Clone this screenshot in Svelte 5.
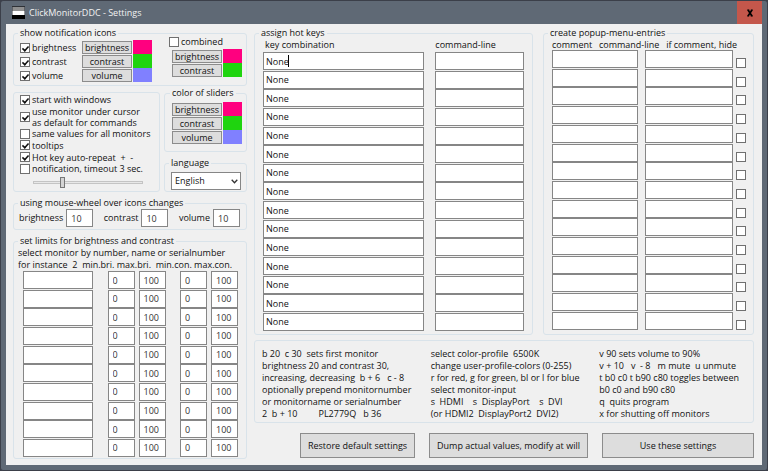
<script>
  const PINK = '#ff007f';
  const GREEN = '#1fd40f';
  const BLUE = '#8080ff';

  const icons = ['brightness', 'contrast', 'volume'];
  const iconColors = [
    { name: 'brightness', color: PINK },
    { name: 'contrast', color: GREEN },
    { name: 'volume', color: BLUE }
  ];
  const options = [
    { text: 'start with windows', on: true },
    { text: 'use monitor under cursor\nas default for commands', on: true },
    { text: 'same values for all monitors', on: false },
    { text: 'tooltips', on: true },
    { text: 'Hot key auto-repeat  +  -', on: true },
    { text: 'notification, timeout 3 sec.', on: false }
  ];
  const limitRows = Array.from({ length: 10 }, (_, i) => i + 1);
  const keyRows = Array.from({ length: 15 }, (_, i) => i + 1);
  const help = [
    [
      'b 20  c 30  sets first monitor',
      'brightness 20 and contrast 30,',
      'increasing, decreasing  b + 6   c - 8',
      'optionally prepend monitornumber',
      'or monitorname or serialnumber',
      '2  b + 10         PL2779Q   b 36'
    ],
    [
      'select color-profile  6500K',
      'change user-profile-colors (0-255)',
      'r for red, g for green, bl or l for blue',
      'select monitor-input',
      's  HDMI    s  DisplayPort    s  DVI',
      '(or HDMI2  DisplayPort2  DVI2)'
    ],
    [
      'v 90 sets volume to 90%',
      'v + 10   v  - 8   m mute  u unmute',
      't b0 c0 t b90 c80 toggles between',
      'b0 c0 and b90 c80',
      'q  quits program',
      'x for shutting off monitors'
    ]
  ];
</script>

{#snippet colorRows(items)}
  <div class="colors">
    {#each items as item}
      <div class="color">
        <button class="btn small">{item.name}</button>
        <span class="swatch" style="background:{item.color}"></span>
      </div>
    {/each}
  </div>
{/snippet}

<div class="window">
  <header>
    <svg class="logo" width="13" height="13" viewBox="0 0 13 13" aria-hidden="true">
      <rect width="13" height="13" fill="#2e3136" />
      <rect x="0.5" y="1" width="12" height="4" fill="#8f8f8f" />
      <rect x="0.5" y="5" width="12" height="4" fill="#fff" />
      <rect y="9" width="13" height="4" fill="#000" />
    </svg>
    <h1>ClickMonitorDDC - Settings</h1>
    <button class="close" aria-label="Close">
      <svg width="8" height="8" viewBox="0 0 8 8" aria-hidden="true">
        <path
          d="M1 1 H3.4 M4.8 1 H7 M1 7 H3.2 M4.6 7 H7"
          stroke="#000"
          stroke-width="0.8"
        />
        <path d="M2 1 L6 7 M6 1 L2 7" stroke="#000" stroke-width="1.7" />
      </svg>
    </button>
  </header>

  <main>
    <div class="left">
      <fieldset class="icons">
        <legend>show notification icons</legend>
        <div class="checks">
          {#each icons as name}
            <label class="check"><input type="checkbox" checked />{name}</label>
          {/each}
        </div>
        {@render colorRows(iconColors)}
        <div class="combined">
          <label class="check"><input type="checkbox" />combined</label>
          {@render colorRows(iconColors.slice(0, 2))}
        </div>
      </fieldset>

      <div class="middle">
        <fieldset class="options" aria-label="options">
          {#each options as option}
            <label class="check"><input type="checkbox" checked={option.on} />{option.text}</label>
          {/each}
          <input class="slider" type="range" min="0" max="100" value="25" aria-label="timeout" />
        </fieldset>
        <div class="side">
          <fieldset class="sliders">
            <legend>color of sliders</legend>
            {@render colorRows(iconColors)}
          </fieldset>
          <fieldset class="language">
            <legend>language</legend>
            <div class="select">
              <select aria-label="language"><option>English</option></select>
              <svg width="7" height="5" viewBox="0 0 7 5" aria-hidden="true">
                <path d="M0.7 0.8 L3.5 3.8 L6.3 0.8" fill="none" stroke="#333" stroke-width="1.3" />
              </svg>
            </div>
          </fieldset>
        </div>
      </div>

      <fieldset class="wheel">
        <legend>using mouse-wheel over icons changes</legend>
        {#each icons as name}
          <label>{name}<input class="num" type="text" value="10" /></label>
        {/each}
      </fieldset>

      <fieldset class="limits">
        <legend>set limits for brightness and contrast</legend>
        <p>select monitor by number, name or serialnumber</p>
        <p>for instance  2  min.bri. max.bri.  min.con. max.con.</p>
        <div class="rows">
          {#each limitRows as n}
            <div class="limit">
              <input class="monitor" type="text" aria-label="monitor {n}" />
              <div class="pair">
                <input class="num" type="text" value="0" aria-label="min.bri. {n}" />
                <input class="num" type="text" value="100" aria-label="max.bri. {n}" />
              </div>
              <div class="pair">
                <input class="num" type="text" value="0" aria-label="min.con. {n}" />
                <input class="num" type="text" value="100" aria-label="max.con. {n}" />
              </div>
            </div>
          {/each}
        </div>
      </fieldset>
    </div>

    <div class="right">
      <div class="tables">
        <fieldset class="keys">
          <legend>assign hot keys</legend>
          <div class="key head"><span>key combination</span><span>command-line</span></div>
          <div class="rows">
            {#each keyRows as n}
              <div class="key">
                <div class="field">
                  <input type="text" value="None" aria-label="key combination {n}" />
                  {#if n === 1}<span class="caret"></span>{/if}
                </div>
                <input type="text" aria-label="command-line {n}" />
              </div>
            {/each}
          </div>
        </fieldset>
        <fieldset class="popup">
          <legend>create popup-menu-entries</legend>
          <div class="titles">
            <span>comment</span><span>command-line</span><span>if comment, hide</span>
          </div>
          <div class="rows">
            {#each keyRows as n}
              <div class="entry">
                <input type="text" aria-label="comment {n}" />
                <input type="text" aria-label="popup command-line {n}" />
                <input type="checkbox" aria-label="hide {n}" />
              </div>
            {/each}
          </div>
        </fieldset>
      </div>

      <section class="help">
        {#each help as column}
          <div>
            {#each column as line}<p>{line}</p>{/each}
          </div>
        {/each}
      </section>

      <footer>
        <button class="btn">Restore default settings</button>
        <button class="btn">Dump actual values, modify at will</button>
        <button class="btn">Use these settings</button>
      </footer>
    </div>
  </main>
</div>

<style>
  :global(body) {
    margin: 0;
    background: #3b3f49;
  }
  .window,
  .window * {
    box-sizing: border-box;
  }
  .window {
    display: flex;
    flex-direction: column;
    min-height: 100vh;
    padding: 0 5px 5px;
    border: 1px solid #3b3f49;
    border-radius: 3px;
    background: #5f6975;
    color: #111;
    font: 9px/12px 'Open Sans', 'Noto Sans', sans-serif;
  }
  input,
  select,
  button {
    margin: 0;
    font: inherit;
    color: inherit;
    border-radius: 0;
  }
  header {
    display: flex;
    align-items: center;
    height: 23px;
    padding-left: 6px;
  }
  h1 {
    flex: 1;
    margin: 0 0 0 4px;
    font-size: 9px;
    font-weight: 400;
    color: #f2f2f2;
  }
  .close {
    align-self: stretch;
    display: grid;
    place-items: center;
    width: 25px;
    padding: 0;
    border: 0;
    background: #c4574b;
  }
  main {
    flex: 1;
    display: grid;
    grid-template-columns: 234fr 500fr;
    gap: 7px;
    padding: 3px 8px 6px 7px;
    background: #f0f0f0;
  }
  fieldset {
    min-width: 0;
    margin: 0;
    padding: 0;
    border: 1px solid #d9e3ea;
    border-radius: 3px;
  }
  legend {
    padding: 0 2px;
    line-height: 12px;
    white-space: nowrap;
  }
  p {
    margin: 0;
    white-space: pre;
  }
  .left,
  .right,
  .side {
    display: flex;
    flex-direction: column;
    min-width: 0;
  }
  .left {
    gap: 5px;
  }

  input[type='text'] {
    width: 100%;
    height: 18px;
    padding: 0 2px;
    border: 1px solid #868686;
    background: #fff;
  }
  input.num {
    width: 27px;
    padding: 0 4px;
    color: #333;
  }
  input[type='checkbox'] {
    appearance: none;
    flex: none;
    width: 10px;
    height: 10px;
    border: 1px solid #707070;
    background: #fff;
  }
  input[type='checkbox']:checked::before {
    content: '';
    display: block;
    width: 3px;
    height: 6px;
    margin: 0 0 0 2px;
    border: solid #111;
    border-width: 0 2px 2px 0;
    box-sizing: content-box;
    transform: rotate(42deg) scale(0.8);
  }
  .check {
    display: flex;
    align-items: center;
    gap: 2px;
    white-space: pre;
  }
  .btn {
    padding: 0;
    border: 1px solid #8c8c8c;
    background: #dddddd;
    white-space: nowrap;
  }
  .small {
    width: 50px;
    height: 13px;
    line-height: 11px;
  }
  .colors {
    display: flex;
    flex-direction: column;
  }
  .color {
    display: flex;
    align-items: center;
    gap: 1px;
    height: 14px;
  }
  .swatch {
    width: 19px;
    height: 14px;
  }

  .icons {
    display: flex;
    height: 59px;
    padding: 1px 4px 0 6px;
  }
  .icons legend {
    margin-left: -2px;
  }
  .checks {
    display: flex;
    flex-direction: column;
    gap: 2px;
    width: 62px;
    padding-top: 2px;
  }
  .combined {
    display: flex;
    flex-direction: column;
    align-items: flex-end;
    width: 73px;
    margin: -4px 0 0 auto;
    gap: 1px;
  }
  .combined .check {
    align-self: flex-start;
  }

  .middle {
    display: grid;
    grid-template-columns: 147fr 83fr;
    gap: 4px;
    margin-top: -4px;
  }
  .options {
    display: flex;
    flex-direction: column;
    justify-content: space-between;
    margin-top: 5px;
    padding: 1px 6px 2px;
    line-height: 11px;
  }
  .slider {
    appearance: none;
    width: 110px;
    height: 12px;
    margin: 2px 0 0 13px;
    background: none;
  }
  .slider::-webkit-slider-runnable-track {
    height: 3px;
    border: 1px solid #c4c4c4;
    background: #e8e8e8;
  }
  .slider::-webkit-slider-thumb {
    appearance: none;
    width: 5px;
    height: 11px;
    margin-top: -5px;
    border: 1px solid #777;
    background: #d4d4d4;
  }
  .side {
    gap: 5px;
  }
  .sliders {
    height: 65px;
    padding: 3px 4px 0 7px;
  }
  .language {
    padding: 3px 5px 1px 6px;
  }
  .side legend {
    margin-left: -2px;
  }
  .select {
    display: grid;
    align-items: center;
  }
  .select > * {
    grid-area: 1 / 1;
  }
  .select svg {
    justify-self: end;
    margin-right: 3px;
    pointer-events: none;
  }
  select {
    appearance: none;
    width: 100%;
    height: 18px;
    padding: 0 3px;
    border: 1px solid #868686;
    background: #fff;
  }

  .wheel {
    display: flex;
    justify-content: space-between;
    height: 33px;
    padding: 0 6px 0 5px;
  }
  .wheel legend {
    margin-left: -1px;
  }
  .wheel label {
    display: flex;
    align-items: center;
    gap: 3px;
    height: 18px;
  }

  .limits {
    flex: 1;
    display: flex;
    flex-direction: column;
    padding: 0 8px 1px 9px;
  }
  .limits legend {
    margin-left: -5px;
  }
  .limits p {
    margin-left: -5px;
  }
  .rows {
    flex: 1;
    display: flex;
    flex-direction: column;
    justify-content: space-between;
  }
  .limit,
  .pair {
    display: flex;
    justify-content: space-between;
    gap: 4px;
  }
  .limit .monitor {
    width: 70px;
  }

  .tables {
    flex: 1;
    display: grid;
    grid-template-columns: 279fr 211fr;
    gap: 10px;
  }
  .keys,
  .popup {
    display: flex;
    flex-direction: column;
    padding: 0 8px 3px;
  }
  .keys legend,
  .popup legend {
    margin-left: -4px;
  }
  .popup {
    padding-bottom: 4px;
  }
  .key {
    display: grid;
    grid-template-columns: 160fr 89fr;
    gap: 11px;
  }
  .key.head {
    padding-left: 2px;
    margin-bottom: 1px;
  }
  .field {
    position: relative;
  }
  .field input {
    display: block;
  }
  .caret {
    position: absolute;
    left: 25px;
    top: 3px;
    width: 1px;
    height: 12px;
    background: #000;
  }
  .titles {
    display: flex;
    justify-content: space-between;
    padding-right: 8px;
    line-height: 11px;
    white-space: nowrap;
  }
  .entry {
    display: grid;
    grid-template-columns: 86fr 89fr 5px;
    column-gap: 7px;
    align-items: end;
  }
  .entry input[type='checkbox'] {
    margin-left: -4px;
  }

  .help {
    display: grid;
    grid-template-columns: 169fr 169fr 154fr;
    height: 83px;
    margin-top: 5px;
    padding: 7px 0 5px 7px;
    border: 1px solid #d9e3ea;
    border-radius: 3px;
  }
  .help div {
    display: flex;
    flex-direction: column;
    justify-content: space-between;
  }
  footer {
    display: grid;
    grid-template-columns: 115fr 159fr 152fr;
    gap: 14px;
    margin: 10px 0 1px 46px;
  }
  footer .btn {
    height: 25px;
  }
</style>
